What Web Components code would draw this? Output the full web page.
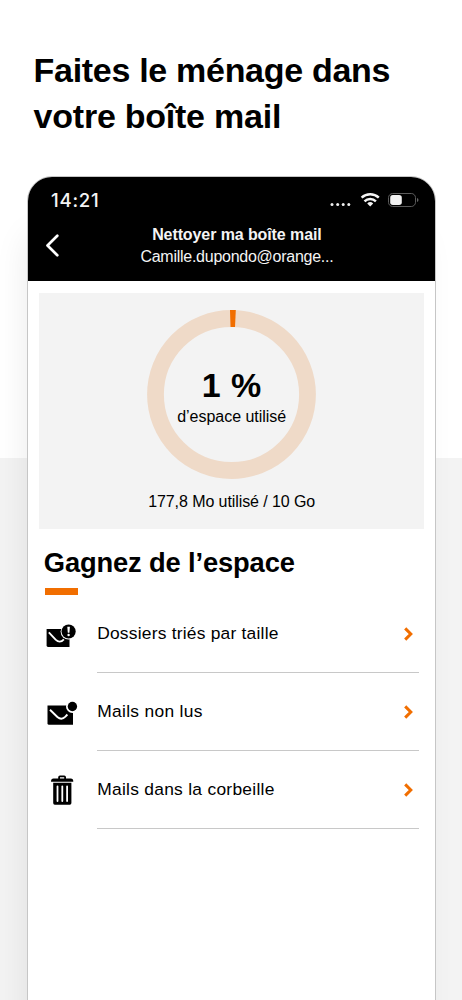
<!DOCTYPE html>
<html lang="fr">
<head>
<meta charset="utf-8">
<title>Nettoyer ma boîte mail</title>
<style>
html,body{margin:0;height:1000px;overflow:hidden}
body{font-family:"Liberation Sans",Arial,sans-serif;color:#000}
</style>
</head>
<body>
<promo-page>
  <text-line slot="title" size="34" line="46.7" weight="700" fit="356.5">Faites le ménage dans</text-line>
  <text-line slot="title" size="34" line="46.7" weight="700" fit="247.5">votre boîte mail</text-line>
  <phone-frame>
    <status-bar slot="bar"></status-bar>
    <nav-header slot="bar">
      <text-line size="16" line="22" weight="700" fit="169.5">Nettoyer ma boîte mail</text-line>
      <text-line size="16" line="22" fit="193">Camille.dupondo@orange...</text-line>
    </nav-header>
    <usage-card>
      <text-line slot="value" size="34" line="36" weight="700" fit="60">1 %</text-line>
      <text-line slot="value" size="16" line="20" fit="109">d’espace utilisé</text-line>
      <text-line slot="caption" size="16" line="20" fit="167">177,8 Mo utilisé / 10 Go</text-line>
    </usage-card>
    <section-title><text-line size="27.3" line="32" weight="700" fit="251">Gagnez de l’espace</text-line></section-title>
    <menu-row icon="alert"><text-line size="17.4" line="22" fit="181.5">Dossiers triés par taille</text-line></menu-row>
    <menu-row icon="unread"><text-line size="17.4" line="22" fit="105.5">Mails non lus</text-line></menu-row>
    <menu-row icon="trash"><text-line size="17.4" line="22" fit="177.5">Mails dans la corbeille</text-line></menu-row>
  </phone-frame>
</promo-page>
<script>
const define = (name, html, setup) => customElements.define(name, class extends HTMLElement {
  connectedCallback() {
    if (this.shadowRoot) return;
    const root = this.attachShadow({mode: 'open'});
    root.innerHTML = typeof html === 'function' ? html(this) : html;
    if (setup) setup(this, root);
  }
});

define('promo-page', `<style>
:host{display:block;box-sizing:border-box;width:462px;height:1000px;padding:46.6px 0 0;overflow:hidden;background:linear-gradient(#fff 458px,#f3f3f3 458px)}
header{height:129.4px;padding-left:33.6px;box-sizing:border-box}
</style><header><slot name="title"></slot></header><slot></slot>`);

define('phone-frame', `<style>
:host{display:block;box-sizing:border-box;width:409px;height:860px;margin-left:27.4px;border:1px solid #c6c6c6;border-radius:25px 25px 0 0;background:#fff;overflow:hidden;box-shadow:-8px 50px 34px -8px rgba(0,0,0,.085)}
.top{background:#000;height:104.5px}
</style><div class="top"><slot name="bar"></slot></div><slot></slot>`);

define('status-bar', `<style>
:host{display:flex;align-items:center;height:46.5px;padding:0 16.8px 0 22.6px;font-family:Inter,sans-serif;color:#f4f4f4}
svg{margin-left:auto;display:block}
</style><text-line size="18.6" line="24" weight="500" fit="48.6">14:21</text-line>
<svg width="90" height="20" viewBox="0 0 90 20">
<g fill="#eee"><circle cx="3" cy="14.5" r="1.5"/><circle cx="8.7" cy="14.5" r="1.5"/><circle cx="14.2" cy="14.5" r="1.5"/><circle cx="19.8" cy="14.5" r="1.5"/></g>
<g fill="none" stroke="#f4f4f4" stroke-width="2.5"><path d="M32.6 7.6a13 13 0 0 1 17.2 0"/><path d="M35.5 11.3a8.3 8.3 0 0 1 11.4 0"/></g>
<path d="M38.2 13.4a4.4 4.4 0 0 1 6 0l-3 3.1z" fill="#f4f4f4"/>
<rect x="59.5" y="3.5" width="27" height="13" rx="4.2" fill="none" stroke="#5b5b5b"/>
<path d="M88 8v4q1.5-.5 1.5-2T88 8z" fill="#666"/>
<rect x="61.2" y="5" width="11.6" height="10" rx="2.7" fill="#f2f2f2"/>
</svg>`);

define('nav-header', `<style>
:host{display:grid;grid-template-columns:40px 1fr 40px;height:58px;color:#f4f4f4}
svg{margin:9px 0 0 15.4px}
.t{display:flex;flex-direction:column;align-items:center;padding:.6px 0 0 10px}
</style><svg width="18" height="27" viewBox="0 0 18 27"><path d="M13.3 3.7 3.5 13.5l9.8 9.8" fill="none" stroke="#fff" stroke-width="2.7" stroke-linecap="round" stroke-linejoin="round"/></svg><div class="t"><slot></slot></div>`);

define('usage-card', `<style>
:host{display:flex;flex-direction:column;align-items:center;box-sizing:border-box;width:385px;height:235.5px;margin:12px 0 0 10.8px;padding-top:16.5px;background:#f3f3f3}
.ring{display:grid;width:169px;height:169px}
.ring>*{grid-area:1/1}
.v{display:flex;flex-direction:column;align-items:center;gap:4.8px;padding-top:56.6px}
.c{margin-top:12.9px}
</style><div class="ring"><svg width="169" height="169" viewBox="0 0 169 169"><circle cx="84.5" cy="84.5" r="76" fill="none" stroke="#efdac8" stroke-width="16.8"/><path d="M83 0h5.8L88 17h-4.5z" fill="#f16e00"/></svg><div class="v"><slot name="value"></slot></div></div><div class="c"><slot name="caption"></slot></div>`);

define('section-title', `<style>
:host{display:block;margin:17.6px 0 0 15.4px}
i{display:block;width:33.2px;height:6.5px;margin:9.7px 0 0 1.3px;background:#f16e00}
</style><slot></slot><i></i>`);

const icons = {
  alert: `<path d="M2.6 10h22.9v18H4q-1.4 0-1.4-1.4z"/><path d="M4.8 13.4l6.8 7.3q4.3 4 8.3-.3" fill="none" stroke="#fff" stroke-width="1.8"/><circle cx="24.6" cy="12.5" r="8" fill="#fff"/><circle cx="24.6" cy="12.5" r="7.1"/><path d="M23.3 7.8h2.6l-.5 5.9h-1.6z" fill="#fff"/><circle cx="24.6" cy="16" r="1.2" fill="#fff"/>`,
  unread: `<path d="M3.5 8.5H29v19.2H5q-1.5 0-1.5-1.5z"/><path d="M6 12.7l7.4 7.3q4.1 3.6 8-.3l2-2.2" fill="none" stroke="#fff" stroke-width="1.9"/><circle cx="28.4" cy="9.5" r="6.4" fill="#fff"/><circle cx="28.4" cy="9.5" r="4.7"/>`,
  trash: `<path d="M7 6.7q0-3.2 2.5-3.2h4.7V2.2Q14.2.5 16 .5h4.2Q22 .5 22 2.2v1.3h4.8q2.5 0 2.5 3.2zM16 2.2v1.3h4.2V2.2z" fill-rule="evenodd"/><path d="M9.2 7.8h18.2v20.3q0 1.6-1.6 1.6h-15q-1.6 0-1.6-1.6z"/><path d="M13.5 11.3V26M18.3 11.3V26M23.1 11.3V26" stroke="#fff" stroke-width="1.8" stroke-linecap="round"/>`
};
define('menu-row', el => `<style>
:host{display:grid;grid-template-columns:53px 321.5px;padding-left:15.8px;height:78px}
.ico{margin-top:24px}
.b{display:flex;align-items:flex-start;justify-content:space-between;box-sizing:border-box;height:78px;padding-top:27.4px;padding-right:4.2px;border-bottom:1px solid #c8c8c8}
.chev{margin-top:3.4px}
</style><svg class="ico" width="36" height="36" viewBox="0 0 36 36">${icons[el.getAttribute('icon')]}</svg>
<div class="b"><slot></slot><svg class="chev" width="12" height="16" viewBox="0 0 12 16"><path d="M2.2 2.4 7.8 8l-5.6 5.6" fill="none" stroke="#f16e00" stroke-width="3"/></svg></div>`);

/* A single line of text, tracked so that its advance equals the fit attribute. */
define('text-line', el => `<style>
:host{display:block;white-space:nowrap;font-size:${el.getAttribute('size')}px;line-height:${el.getAttribute('line')}px;height:${el.getAttribute('line')}px;font-weight:${el.getAttribute('weight') || 400}}
span{display:inline-block;vertical-align:top}
</style><span><slot></slot></span>`, (el, root) => {
  requestAnimationFrame(() => {
    const s = root.querySelector('span');
    const n = el.textContent.length;
    const w = s.getBoundingClientRect().width;
    s.style.letterSpacing = (Number(el.getAttribute('fit')) - w) / n + 'px';
  });
});
</script>
</body>
</html>
